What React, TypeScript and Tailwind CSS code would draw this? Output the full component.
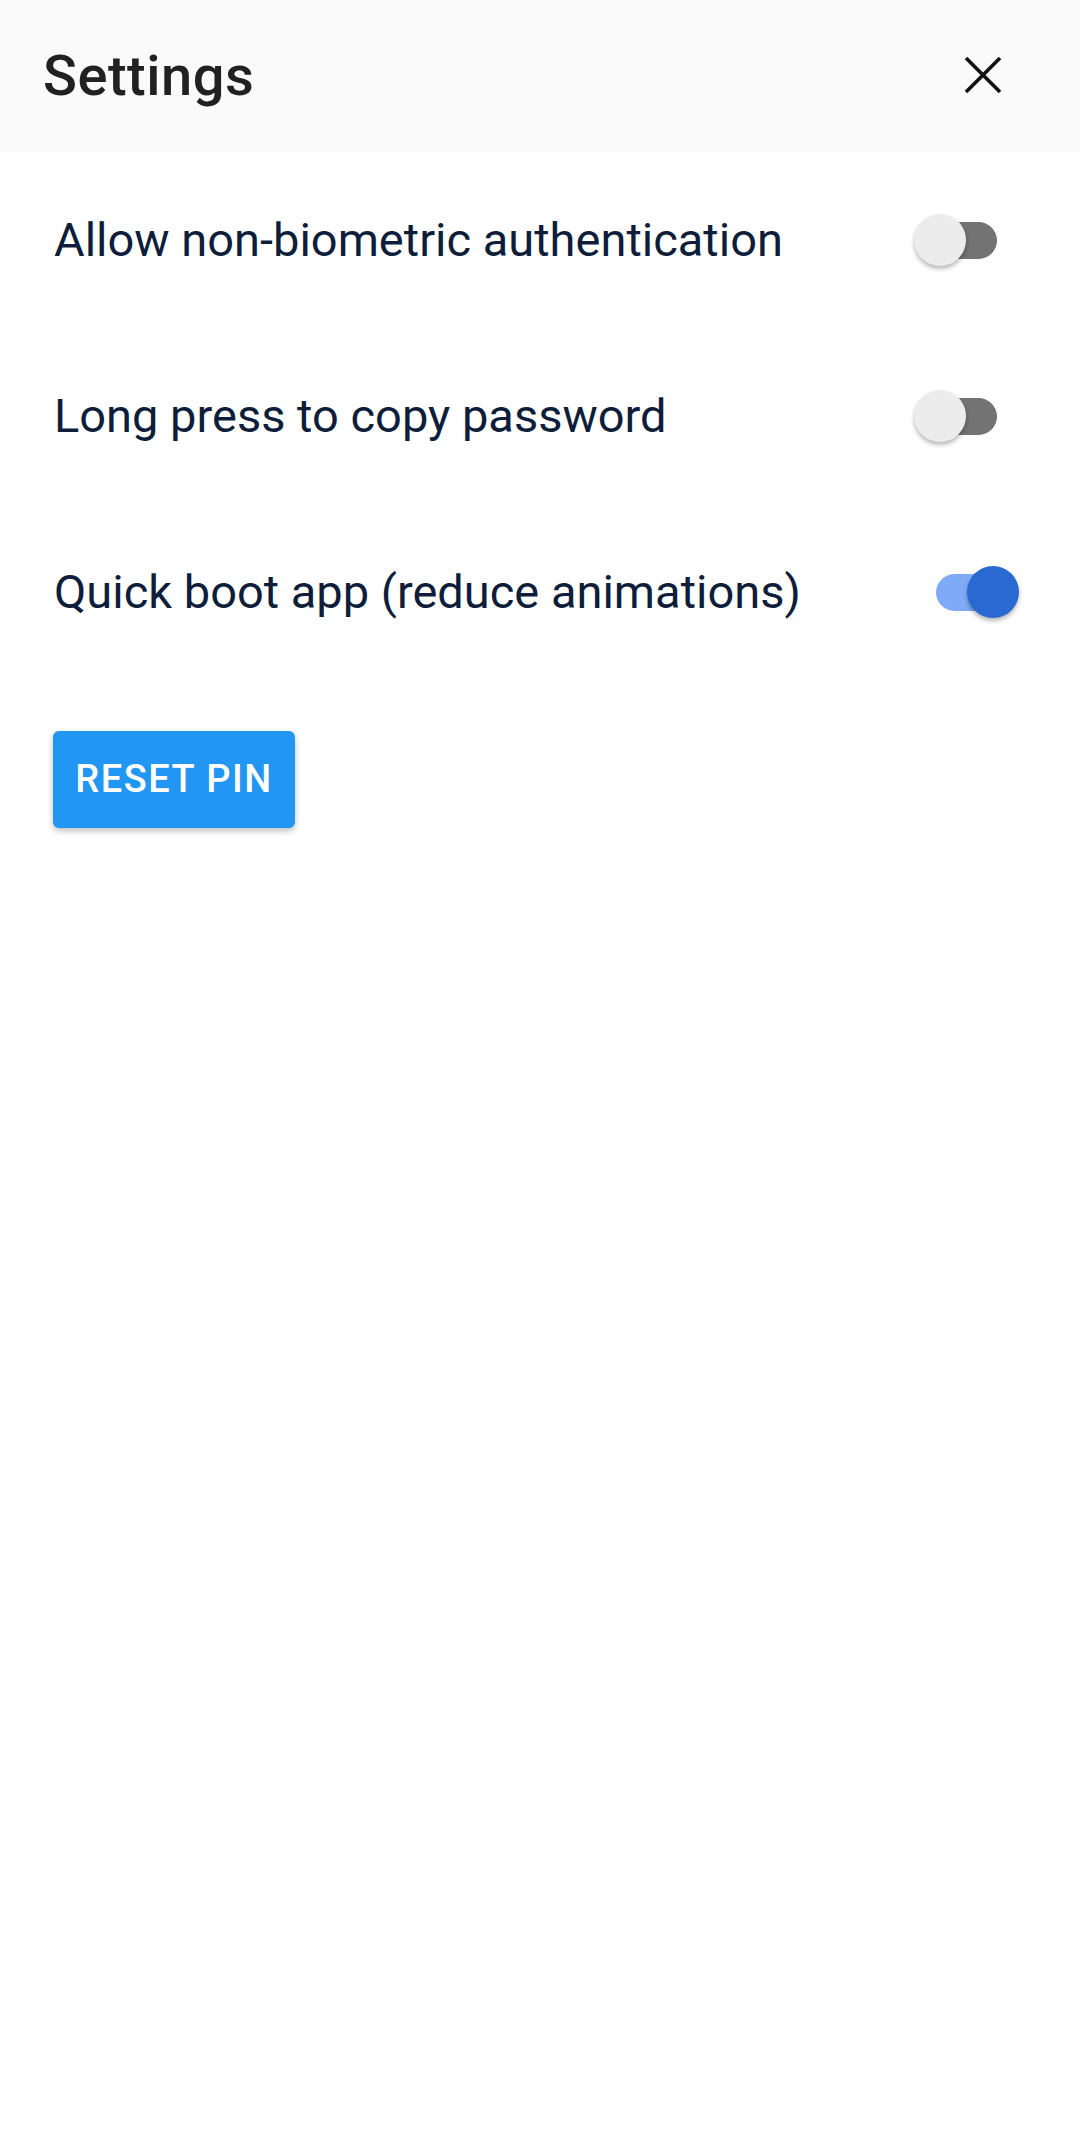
import React from "react";

interface IToggleProps {
   checked: boolean;
   className?: string;
}

const Toggle = ({ checked, className = "" }: IToggleProps) => {
   return (
      <div
         className={`relative h-[37px] w-[75px] shrink-0 rounded-full ${
            checked ? "bg-[#7fabf6]" : "bg-[#737373]"
         } ${className}`}
      >
         <div
            className={`absolute top-[-8px] size-[52px] rounded-full shadow-[0_3px_4px_rgba(0,0,0,0.28)] ${
               checked ? "right-[-8px] bg-[#2a68d2]" : "left-[-8px] bg-[#ececec]"
            }`}
         />
      </div>
   );
};

const settings = [
   { label: "Allow non-biometric authentication", checked: false, offset: "mr-[83px]" },
   { label: "Long press to copy password", checked: false, offset: "mr-[83px]" },
   { label: "Quick boot app (reduce animations)", checked: true, offset: "mr-[69px]" },
];

export default function App() {
   return (
      <div
         className="flex min-h-[2131px] w-[1080px] flex-col bg-white"
         style={{ fontFamily: "Roboto, 'Noto Sans', sans-serif" }}
      >
         <div className="flex h-[152px] items-center justify-between bg-[#fafafa] pl-[43px] pr-[78px]">
            <span className="text-[56px] font-medium tracking-[0.5px] text-[#212121]">Settings</span>
            <svg width="38" height="38" viewBox="0 0 38 38" className="mt-[-2px]">
               <path d="M2 2 L36 36 M36 2 L2 36" stroke="#111" strokeWidth="3.6" />
            </svg>
         </div>

         <div className="flex flex-col">
            {settings.map((item) => (
               <div key={item.label} className="flex h-[176px] items-center justify-between pl-[54px]">
                  <span className="text-[47px] text-[#0e1d3a]">{item.label}</span>
                  <Toggle checked={item.checked} className={item.offset} />
               </div>
            ))}
         </div>

         <div className="pl-[53px] pt-[51px]">
            <button className="flex h-[97px] w-[242px] items-center justify-center rounded-[6px] bg-[#2196f3] text-[38px] font-medium tracking-[1.5px] text-white shadow-[0_3px_6px_rgba(0,0,0,0.25)]">
               RESET PIN
            </button>
         </div>
      </div>
   );
}
